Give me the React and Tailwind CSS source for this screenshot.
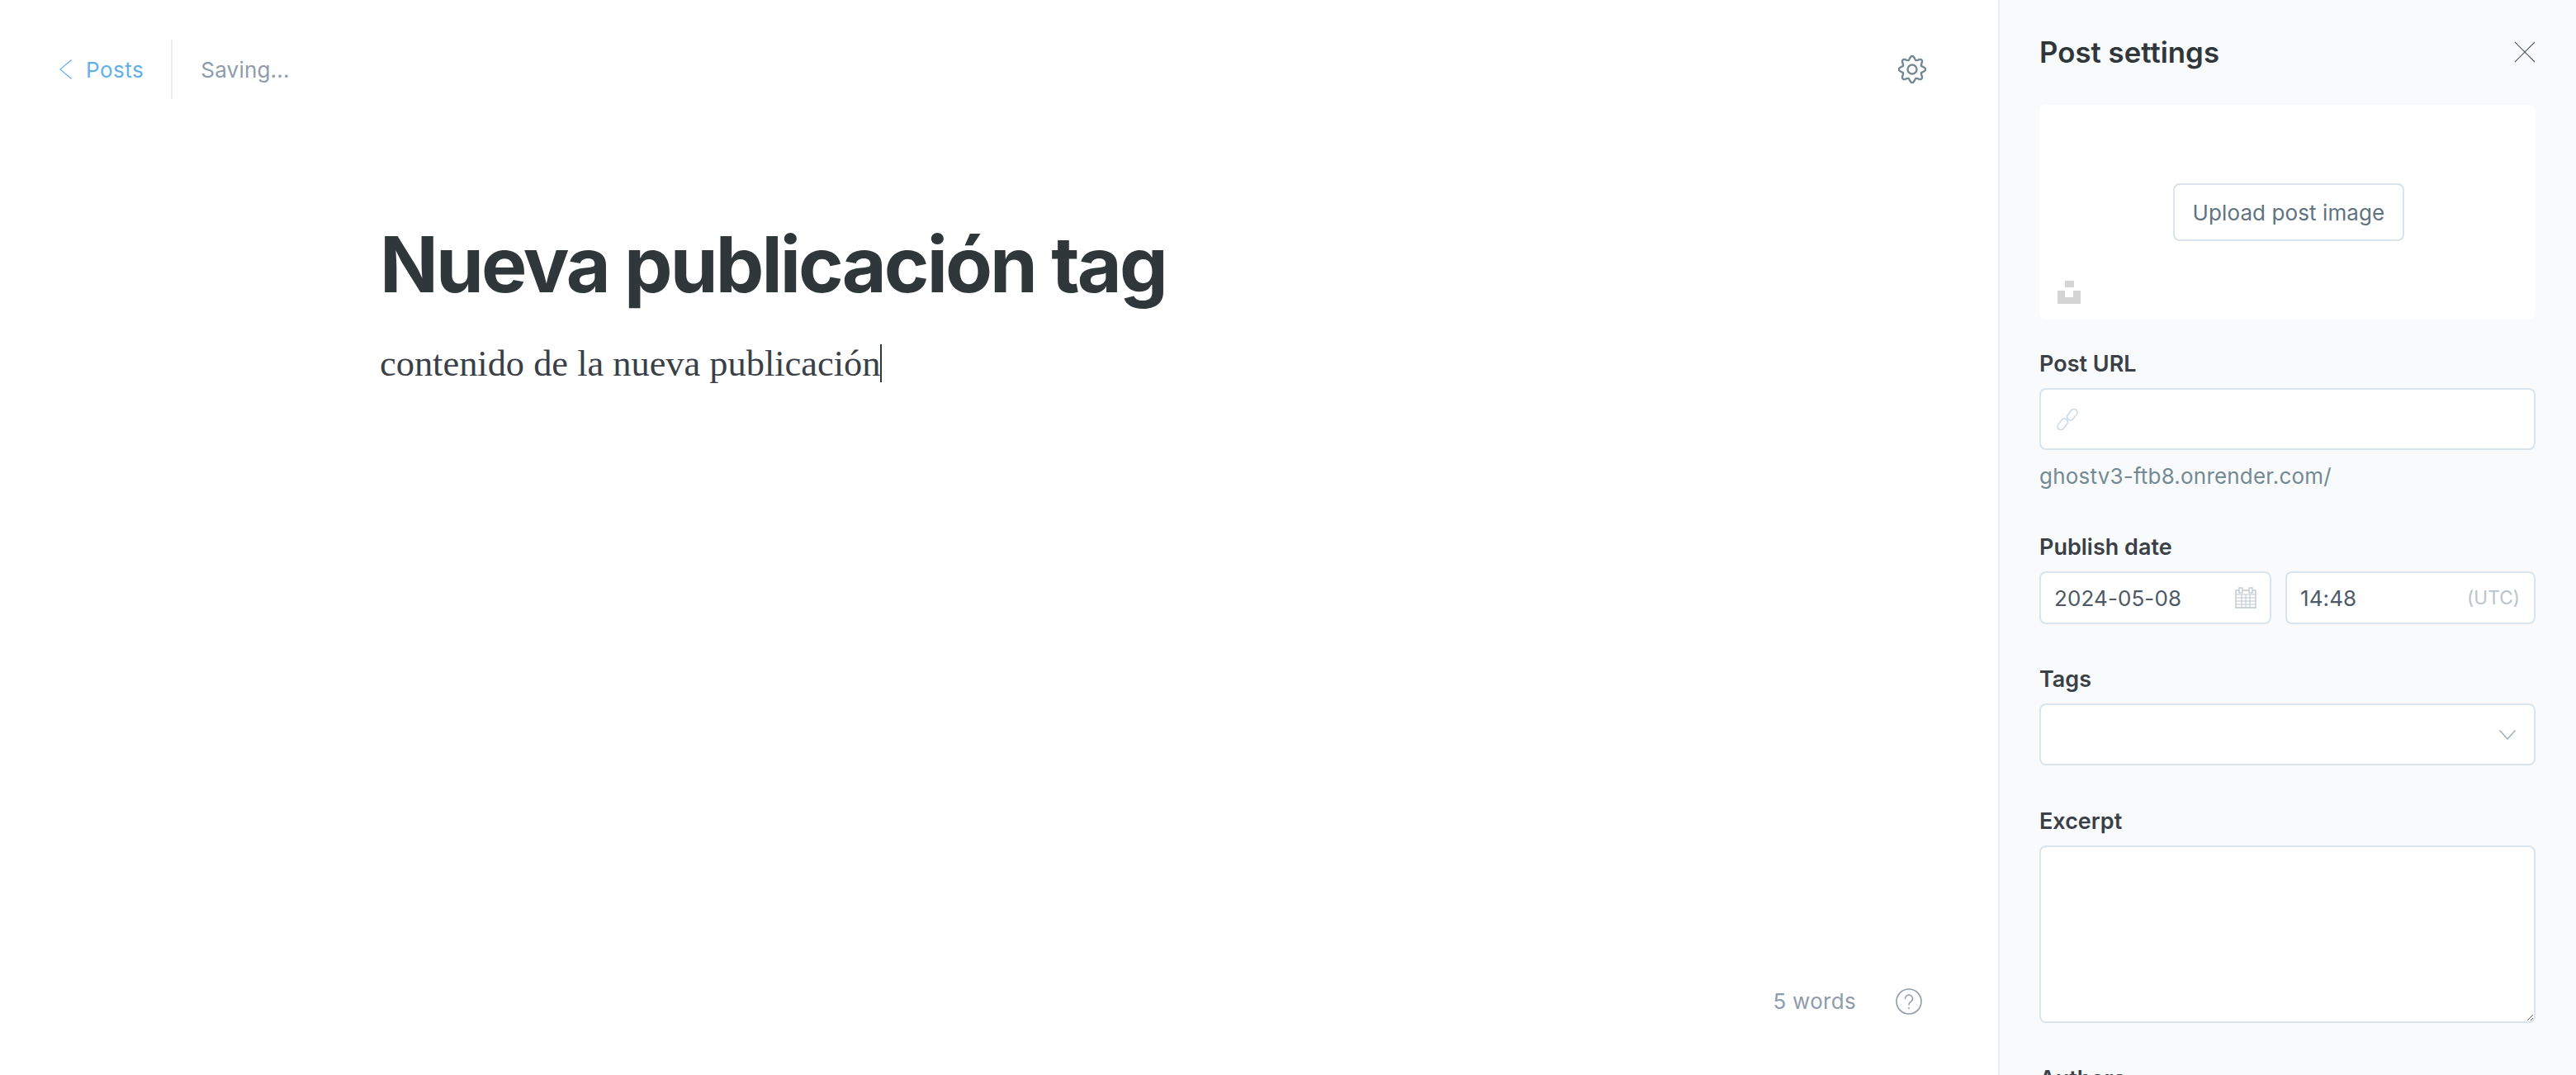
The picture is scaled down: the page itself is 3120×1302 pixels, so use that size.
const inter = "font-['Inter',sans-serif]";

// wavy 8 lobed outline for the settings gear
function gearPath() {
  const pts = [];
  for (let i = 0; i < 96; i++) {
    const t = (i / 96) * Math.PI * 2;
    const r = 14 + 2.2 * Math.cos(8 * t);
    pts.push(`${(17 + r * Math.sin(t)).toFixed(2)} ${(17 - r * Math.cos(t)).toFixed(2)}`);
  }
  return `M${pts.join("L")}Z`;
}

function GearIcon() {
  return (
    <svg viewBox="0 0 34 34" fill="none" stroke="#738a94" strokeWidth="2.4" className="w-[34px] h-[34px]">
      <path d={gearPath()} strokeLinejoin="round" />
      <circle cx="17" cy="17" r="5.5" />
    </svg>
  );
}

function HelpIcon() {
  return (
    <svg viewBox="0 0 32 32" fill="none" stroke="#8e9cac" strokeWidth="1.6" className="w-8 h-8">
      <circle cx="16" cy="16" r="15" />
      <path d="M11.5 12.5a4.5 4.5 0 1 1 6.8 3.9c-1.4.8-2.3 1.6-2.3 3.4" strokeLinecap="round" />
      <circle cx="16" cy="24" r="1" fill="#8e9cac" stroke="none" />
    </svg>
  );
}

function LinkIcon() {
  return (
    <svg viewBox="0 0 26 26" fill="none" stroke="#c5d9e8" strokeWidth="1.5" className="w-[26px] h-[26px]">
      <rect x="-7.5" y="-4" width="15" height="8" rx="4" transform="translate(7.2 18.8) rotate(-52)" />
      <rect x="-7.5" y="-4" width="15" height="8" rx="4" transform="translate(18.8 7.2) rotate(-52)" />
    </svg>
  );
}

function CalendarIcon() {
  return (
    <svg viewBox="0 0 26 26" fill="none" stroke="#bcc7cf" strokeWidth="1.3" className="w-[26px] h-[26px]">
      <path d="M1 4h24v21H1z" />
      <path d="M1 9h24M1 13h24M1 17h24M1 21h24M8 9v16M13 9v16M18 9v16" strokeWidth="1" />
      <rect x="5" y="1" width="4" height="6" fill="#fff" />
      <rect x="17" y="1" width="4" height="6" fill="#fff" />
    </svg>
  );
}

function Label({ children, className = "" }) {
  return (
    <div className={`text-[27px] leading-[34px] font-semibold text-[#394047] ${className}`}>
      {children}
    </div>
  );
}

export default function App() {
  return (
    <div className={`flex h-screen w-full overflow-hidden bg-white ${inter}`}>
      {/* Editor */}
      <div className="flex flex-col flex-1 min-w-0">
        <div className="flex items-center justify-between h-[168px] pl-[72px] pr-[87px] shrink-0">
          <div className="flex items-center">
            <div className="flex items-center gap-[17px] text-[#62b0ea] text-[26px] tracking-[0.5px]">
              <svg viewBox="0 0 15 24" fill="none" stroke="#62b0ea" strokeWidth="1.2" className="w-[15px] h-6">
                <path d="M14.5 0.5L0.8 12l13.7 11.5" />
              </svg>
              Posts
            </div>
            <div className="w-0.5 h-[72px] bg-[#e6eef5] ml-[33px]" />
            <div className="ml-[34px] text-[26px] text-[#8e9cac] tracking-[0.2px]">Saving...</div>
          </div>
          <GearIcon />
        </div>

        <div className="pl-[460px] pt-[96px]">
          <h1 className="text-[93px] leading-[112px] font-[650] text-[#30373b] tracking-[-2.9px]">
            Nueva publicación tag
          </h1>
          <div className="mt-[35px] flex items-center font-['Liberation_Serif',serif] text-[44.4px] leading-[58px] text-[#394047]">
            contenido de la nueva publicación
            <span className="w-0.5 h-[46px] bg-[#30373b]" />
          </div>
        </div>

        <div className="mt-auto flex items-center justify-end gap-[48px] pr-[92px] pb-[70px] text-[26px] text-[#8e9cac] tracking-[0.3px]">
          5 words
          <HelpIcon />
        </div>
      </div>

      {/* Settings sidebar */}
      <div className="w-[700px] shrink-0 border-l-2 border-[#e6eef5] bg-[#f9fafb] pl-[48px] pr-[49px] h-[1302px] overflow-hidden">
        <div className="flex items-center justify-between h-[127px]">
          <h2 className="text-[34.8px] font-semibold text-[#30373b]">Post settings</h2>
          <svg viewBox="0 0 26 26" fill="none" stroke="#4f5b63" strokeWidth="1.1" className="w-[26px] h-[26px] -mt-[2px]">
            <path d="M1 1l24 24M25 1L1 25" />
          </svg>
        </div>

        <div className="relative flex items-center justify-center h-[260px] rounded-lg bg-white">
          <div className="flex items-center h-[70px] ml-[3px] px-[22px] border-2 border-[#d9e3e9] rounded-lg text-[26px] text-[#5f7380] tracking-[0.1px]">
            Upload post image
          </div>
          <svg viewBox="0 0 28 28" fill="#d4d4d4" className="absolute left-[22px] bottom-[19px] w-7 h-7">
            <path d="M9 0h11v8H9zM0 12h9v8h10v-8h9v16H0z" />
          </svg>
        </div>

        <Label className="mt-[37px]">Post URL</Label>
        <div className="mt-[12px] flex items-center h-[75px] pl-[19px] rounded-lg border-2 border-[#d9e4ec] bg-white">
          <LinkIcon />
        </div>
        <div className="mt-[15px] text-[26px] leading-[34px] text-[#738a94] tracking-[0.2px]">
          ghostv3-ftb8.onrender.com/
        </div>

        <Label className="mt-[52px]">Publish date</Label>
        <div className="mt-[12px] flex gap-[17px]">
          <div className="flex items-center justify-between w-[281px] h-[64px] pl-[16px] pr-[16px] rounded-lg border-2 border-[#d9e4ec] bg-white text-[26px] text-[#4b5a65] tracking-[0.1px]">
            2024-05-08
            <CalendarIcon />
          </div>
          <div className="flex items-center justify-between flex-1 h-[64px] pl-[16px] pr-[17px] rounded-lg border-2 border-[#d9e4ec] bg-white text-[26px] text-[#4b5a65] tracking-[0.1px]">
            14:48
            <span className="text-[22.5px] text-[#b8c3cb]">(UTC)</span>
          </div>
        </div>

        <Label className="mt-[50px]">Tags</Label>
        <div className="mt-[12px] flex items-center justify-end h-[75px] pr-[22px] rounded-lg border-2 border-[#d9e4ec] bg-white">
          <svg viewBox="0 0 20 12" fill="none" stroke="#a8b5be" strokeWidth="1.6" className="w-5 h-3">
            <path d="M0.5 0.5L10 11l9.5-10.5" />
          </svg>
        </div>

        <Label className="mt-[51px]">Excerpt</Label>
        <textarea className="block mt-[12px] w-full h-[215px] rounded-lg border-2 border-[#d9e4ec] bg-white outline-none" />

        <Label className="mt-[51px]">Authors</Label>
      </div>
    </div>
  );
}
